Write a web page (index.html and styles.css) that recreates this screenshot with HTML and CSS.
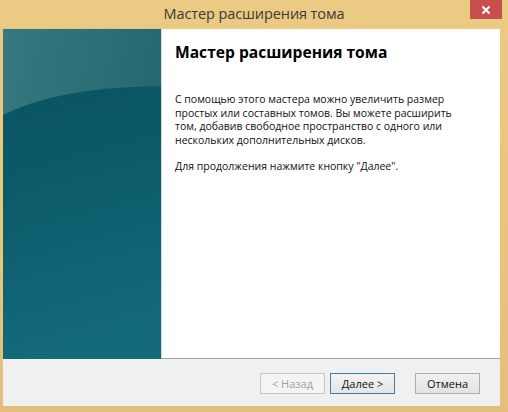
FILE: index.html
```html
<!DOCTYPE html>
<html lang="ru">
<head>
<meta charset="utf-8">
<title>Мастер расширения тома</title>
<link rel="stylesheet" href="styles.css">
</head>
<body>
<div class="window">
  <div class="titlebar">
    <span class="title">Мастер расширения тома</span>
    <button class="close" aria-label="Закрыть">
      <svg width="10" height="10" viewBox="0 0 10 10"><path d="M1.5 1.5 L8.5 8.5 M8.5 1.5 L1.5 8.5" stroke="#fff" stroke-width="2"/></svg>
    </button>
  </div>
  <div class="client">
    <div class="main">
      <div class="side">
        <svg width="158" height="330" viewBox="0 0 158 330" preserveAspectRatio="none">
          <defs>
            <linearGradient id="top" x1="0" y1="0" x2="1" y2="0.3">
              <stop offset="0" stop-color="#387880"/>
              <stop offset="1" stop-color="#236770"/>
            </linearGradient>
            <linearGradient id="low" x1="0" y1="0" x2="0.15" y2="1">
              <stop offset="0" stop-color="#0a5461"/>
              <stop offset="0.45" stop-color="#0c5c6b"/>
              <stop offset="1" stop-color="#14697b"/>
            </linearGradient>
          </defs>
          <rect width="158" height="330" fill="url(#top)"/>
          <path d="M0 86 Q 55 58 158 57 L158 330 L0 330 Z" fill="url(#low)"/>
        </svg>
      </div>
      <div class="content">
        <h1 class="heading">Мастер расширения тома</h1>
        <p class="text">С помощью этого мастера можно увеличить размер простых или составных томов. Вы можете расширить том, добавив свободное пространство с одного или нескольких дополнительных дисков.</p>
        <p class="text">Для продолжения нажмите кнопку "Далее".</p>
      </div>
    </div>
    <div class="footer">
      <button class="btn disabled" disabled>&lt; Назад</button>
      <button class="btn default">Далее &gt;</button>
      <button class="btn cancel">Отмена</button>
    </div>
  </div>
</div>
</body>
</html>
```
FILE: styles.css
```css
* { box-sizing: border-box; }
html, body { margin: 0; padding: 0; }
body {
  width: 508px;
  height: 412px;
  overflow: hidden;
  background: #e9c880;
  font-family: "Open Sans", "Noto Sans", sans-serif;
}
.window {
  width: 508px;
  height: 412px;
  display: flex;
  flex-direction: column;
  background: linear-gradient(180deg, #ebca83 0%, #e8c67e 50%, #e3c07a 100%);
}
.titlebar {
  height: 29px;
  display: grid;
  grid-template-columns: 1fr auto 1fr;
  align-items: start;
}
.title {
  grid-column: 2;
  font-family: "Open Sans", "Noto Sans", sans-serif;
  font-size: 14.5px;
  color: #3a3a3a;
  line-height: 18px;
  padding-top: 5px;
  letter-spacing: -0.1px;
}
.close {
  grid-column: 3;
  justify-self: end;
  margin-right: 6px;
  width: 32px;
  height: 19px;
  border: 0;
  padding: 0;
  background: #c74f4e;
  display: flex;
  align-items: center;
  justify-content: center;
}
.client {
  margin: 0 8px 6px 3px;
  flex: 1;
  display: flex;
  flex-direction: column;
  background: #f0f0f0;
}
.main {
  height: 330px;
  display: flex;
  background: #fff;
  border-bottom: 1px solid #a0a0a0;
}
.side {
  width: 158px;
  flex: none;
  box-shadow: 1px 0 1px rgba(0,0,0,0.15);
}
.side svg { display: block; }
.content {
  flex: 1;
  padding: 13px 14px 0 14px;
  color: #000;
}
.heading {
  margin: 0 0 30px 0;
  font-family: "Open Sans", "Noto Sans", sans-serif;
  font-weight: 700;
  font-size: 15.6px;
  line-height: 21px;
}
.text {
  margin: 0 0 12px 0;
  font-size: 10.5px;
  line-height: 13.7px;
  color: #111;
  width: 280px;
}
.footer {
  flex: 1;
  display: flex;
  justify-content: flex-end;
  align-items: flex-start;
  padding: 14px 20px 0 0;
}
.btn {
  width: 65px;
  height: 21px;
  padding: 0;
  font-family: "Open Sans", "Noto Sans", sans-serif;
  font-size: 11px;
  color: #111;
  border: 1px solid #adadad;
  background: linear-gradient(#f0f0f0, #e3e3e3);
  border-radius: 0;
}
.btn.disabled {
  color: #a2a2a2;
  border-color: #c6c6c6;
  background: #f4f4f4;
  margin-right: 5px;
}
.btn.default {
  border-color: #3c7fb1;
  margin-right: 20px;
  background: linear-gradient(#f3f3f3, #e5e5e5);
}
```
